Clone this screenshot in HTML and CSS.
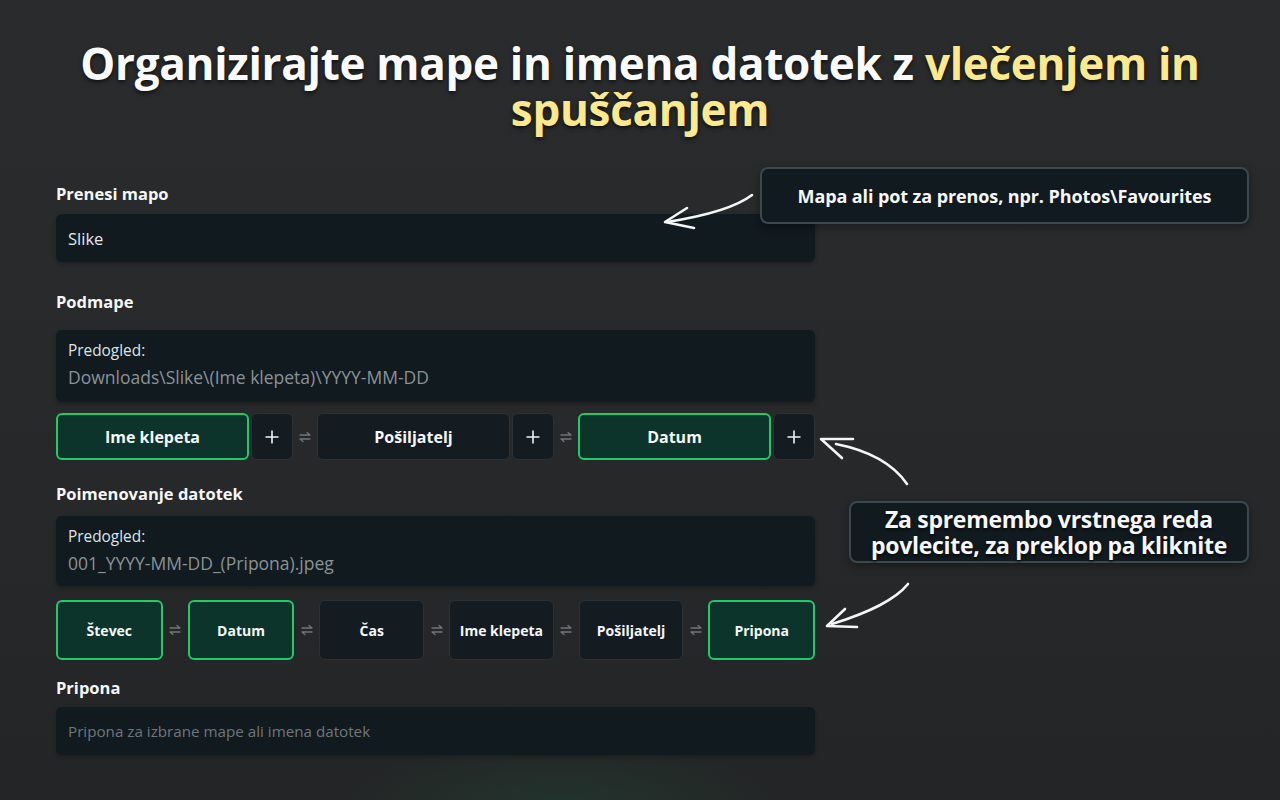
FILE: index.html
```html
<!DOCTYPE html>
<html lang="sl">
<head>
<meta charset="utf-8">
<title>Organizirajte mape</title>
<link rel="stylesheet" href="styles.css">
</head>
<body>
<div class="page">
  <h1 class="title"><span class="line">Organizirajte mape in imena datotek z <span class="hl">vlečenjem in</span></span><span class="line"><span class="hl">spuščanjem</span></span></h1>

  <div class="form">
    <div class="label">Prenesi mapo</div>
    <div class="input"><span class="value">Slike</span></div>

    <div class="label label-sub">Podmape</div>
    <div class="preview">
      <div class="preview-title">Predogled:</div>
      <div class="preview-text">Downloads\Slike\(Ime klepeta)\YYYY-MM-DD</div>
    </div>
    <div class="row row-folders">
      <div class="group">
        <div class="chip chip-lg on">Ime klepeta</div>
        <div class="plus"><svg viewBox="0 0 16 16" width="16" height="16"><path d="M8 1.5v13M1.5 8h13" stroke="#f2f4f5" stroke-width="1.6" fill="none"/></svg></div>
      </div>
      <div class="swap"><svg viewBox="0 0 14 14" width="14" height="14"><path d="M2 5h10L9 2.5M12 9H2l3 2.5" stroke="#6f777c" stroke-width="1.3" fill="none" stroke-linecap="round" stroke-linejoin="round"/></svg></div>
      <div class="group">
        <div class="chip chip-lg">Pošiljatelj</div>
        <div class="plus"><svg viewBox="0 0 16 16" width="16" height="16"><path d="M8 1.5v13M1.5 8h13" stroke="#f2f4f5" stroke-width="1.6" fill="none"/></svg></div>
      </div>
      <div class="swap"><svg viewBox="0 0 14 14" width="14" height="14"><path d="M2 5h10L9 2.5M12 9H2l3 2.5" stroke="#6f777c" stroke-width="1.3" fill="none" stroke-linecap="round" stroke-linejoin="round"/></svg></div>
      <div class="group">
        <div class="chip chip-lg on">Datum</div>
        <div class="plus"><svg viewBox="0 0 16 16" width="16" height="16"><path d="M8 1.5v13M1.5 8h13" stroke="#f2f4f5" stroke-width="1.6" fill="none"/></svg></div>
      </div>
    </div>

    <div class="label label-files">Poimenovanje datotek</div>
    <div class="preview preview-files">
      <div class="preview-title">Predogled:</div>
      <div class="preview-text">001_YYYY-MM-DD_(Pripona).jpeg</div>
    </div>
    <div class="row row-files">
      <div class="chip chip-sm on">Števec</div>
      <div class="swap"><svg viewBox="0 0 14 14" width="14" height="14"><path d="M2 5h10L9 2.5M12 9H2l3 2.5" stroke="#6f777c" stroke-width="1.3" fill="none" stroke-linecap="round" stroke-linejoin="round"/></svg></div>
      <div class="chip chip-sm on">Datum</div>
      <div class="swap"><svg viewBox="0 0 14 14" width="14" height="14"><path d="M2 5h10L9 2.5M12 9H2l3 2.5" stroke="#6f777c" stroke-width="1.3" fill="none" stroke-linecap="round" stroke-linejoin="round"/></svg></div>
      <div class="chip chip-sm">Čas</div>
      <div class="swap"><svg viewBox="0 0 14 14" width="14" height="14"><path d="M2 5h10L9 2.5M12 9H2l3 2.5" stroke="#6f777c" stroke-width="1.3" fill="none" stroke-linecap="round" stroke-linejoin="round"/></svg></div>
      <div class="chip chip-sm">Ime klepeta</div>
      <div class="swap"><svg viewBox="0 0 14 14" width="14" height="14"><path d="M2 5h10L9 2.5M12 9H2l3 2.5" stroke="#6f777c" stroke-width="1.3" fill="none" stroke-linecap="round" stroke-linejoin="round"/></svg></div>
      <div class="chip chip-sm">Pošiljatelj</div>
      <div class="swap"><svg viewBox="0 0 14 14" width="14" height="14"><path d="M2 5h10L9 2.5M12 9H2l3 2.5" stroke="#6f777c" stroke-width="1.3" fill="none" stroke-linecap="round" stroke-linejoin="round"/></svg></div>
      <div class="chip chip-sm on">Pripona</div>
    </div>

    <div class="label label-ext">Pripona</div>
    <div class="input"><span class="placeholder">Pripona za izbrane mape ali imena datotek</span></div>
  </div>

  <div class="callout callout-top">Mapa ali pot za prenos, npr. Photos\Favourites</div>
  <div class="callout callout-mid"><span class="cl">Za spremembo vrstnega reda</span><span class="cl">povlecite, za preklop pa kliknite</span></div>

  <svg class="arrows" viewBox="0 0 1280 800" width="1280" height="800">
    <g stroke="#f4f5f5" stroke-width="2.6" fill="none" stroke-linecap="round" stroke-linejoin="round">
      <path d="M752 195 C735 208 705 216 667 222"/>
      <path d="M687 208 L665 222 L694 228"/>
      <path d="M907 484 C892 462 866 450 836 444"/>
      <path d="M853 439 L821 439 L842 458"/>
      <path d="M908 584 C895 600 870 612 832 624"/>
      <path d="M845 609 L827 626 L857 627"/>
    </g>
  </svg>
</div>
</body>
</html>
```

FILE: styles.css
```css
* { box-sizing: border-box; }
html, body { margin: 0; padding: 0; }
body {
  width: 1280px;
  height: 800px;
  overflow: hidden;
  font-family: "Open Sans", "Liberation Sans", sans-serif;
  color: #f3f5f6;
  background:
    radial-gradient(ellipse 240px 80px at 560px 815px, rgba(34, 90, 60, 0.3), rgba(34, 90, 60, 0) 100%),
    linear-gradient(180deg, #2a2b2c 0%, #27292a 50%, #232526 100%);
}
.page {
  position: relative;
  width: 1280px;
  height: 800px;
  padding-top: 40px;
}
.title {
  margin: 0 auto;
  width: 1200px;
  display: flex;
  flex-direction: column;
  align-items: center;
  font-size: 44px;
  line-height: 46px;
  font-weight: 700;
  letter-spacing: -0.3px;
  color: #fafafa;
  text-shadow: 0 2px 4px rgba(0, 0, 0, 0.65);
}
.line { display: block; white-space: nowrap; }
.hl { color: #fde98d; }

.form {
  margin-left: 56px;
  width: 759px;
  padding-top: 52px;
}
.label {
  font-size: 16.5px;
  line-height: 20px;
  font-weight: 700;
  color: #f5f6f7;
  margin-bottom: 10px;
}
.label-sub { margin-top: 30px; margin-bottom: 18px; }
.label-files { margin-top: 24px; margin-bottom: 12px; }
.label-ext { margin-top: 18px; margin-bottom: 9px; }

.input {
  height: 48px;
  background: #111a1f;
  border-radius: 6px;
  display: flex;
  align-items: center;
  padding-left: 12px;
  box-shadow: 0 2px 4px rgba(0, 0, 0, 0.25);
}
.value { font-size: 16.5px; color: #e4e7e8; }
.placeholder { font-size: 15.2px; color: #6f777b; }

.preview {
  height: 72px;
  background: #111a1f;
  border-radius: 6px;
  padding: 11px 12px 0;
  box-shadow: 0 2px 4px rgba(0, 0, 0, 0.25);
}
.preview-files { height: 70px; }
.preview-title { font-size: 15.4px; line-height: 20px; color: #dfe3e5; }
.preview-text { font-size: 17.5px; line-height: 24px; margin-top: 4px; color: #8a9296; }

.row { display: flex; align-items: center; }
.row-folders { margin-top: 11px; height: 47px; }
.row-files { margin-top: 14px; height: 60px; }

.group { display: flex; gap: 2px; flex: 1; height: 100%; }
.chip {
  display: flex;
  align-items: center;
  justify-content: center;
  font-weight: 700;
  color: #f4f6f7;
  background: #141c21;
  border: 1px solid #2a3237;
  border-radius: 6px;
  height: 100%;
}
.chip.on {
  background: #0d342a;
  border: 2px solid #1fcb69;
}
.chip-lg { flex: 1; font-size: 16px; }
.chip-sm { flex: 1; font-size: 14px; }
.plus {
  width: 42px;
  flex: none;
  display: flex;
  align-items: center;
  justify-content: center;
  background: #141c21;
  border: 1px solid #2a3237;
  border-radius: 6px;
}
.swap {
  flex: none;
  width: 24px;
  display: flex;
  align-items: center;
  justify-content: center;
}
.row-files .swap { width: 25px; }

.callout {
  position: absolute;
  background: #111a1f;
  border: 2px solid #3b484e;
  border-radius: 8px;
  display: flex;
  flex-direction: column;
  align-items: center;
  justify-content: center;
  text-align: center;
  font-weight: 700;
  color: #f6f7f8;
  box-shadow: 0 3px 8px rgba(0, 0, 0, 0.35);
}
.callout-top {
  left: 760px;
  top: 167px;
  width: 489px;
  height: 57px;
  font-size: 18px;
  letter-spacing: -0.1px;
}
.callout-mid {
  left: 849px;
  top: 501px;
  width: 400px;
  height: 62px;
  font-size: 23px;
  line-height: 26px;
  letter-spacing: -0.3px;
  text-shadow: 0 2px 3px rgba(0, 0, 0, 0.6);
}
.cl { display: block; white-space: nowrap; }
.arrows {
  position: absolute;
  left: 0;
  top: 0;
  pointer-events: none;
}
```
